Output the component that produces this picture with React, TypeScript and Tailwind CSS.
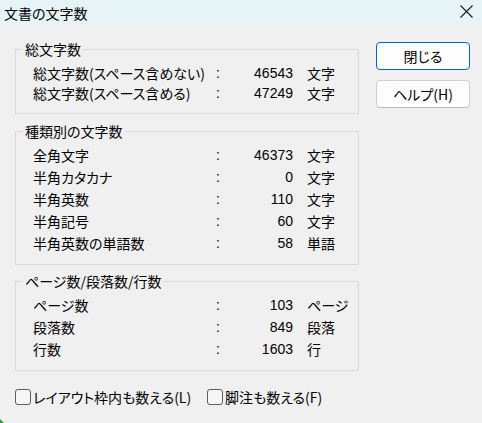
import React from "react";

const jp = "font-['Noto_Sans_CJK_JP','Noto_Sans',sans-serif] [font-feature-settings:'palt']";
const num = "font-['Liberation_Sans','Noto_Sans_CJK_JP',sans-serif]";

type Row = { label: string; value: string; unit: string };

function Group({
  title,
  rows,
  rowH,
  pt,
  className,
}: {
  title: string;
  rows: Row[];
  rowH: string;
  pt: string;
  className?: string;
}) {
  return (
    <div className={`relative border border-[#dadada] pb-[10px] ${pt} ${className ?? ""}`}>
      <span className={`absolute left-[7px] top-[-10px] bg-[#f0f0f0] px-[2px] text-[14px] leading-[18px] text-black ${jp}`}>
        {title}
      </span>
      {rows.map((r) => (
        <div key={r.label} className={`flex items-center ${rowH} text-[14px] text-black`}>
          <span className={`ml-[17px] w-[180px] whitespace-nowrap ${jp}`}>{r.label}</span>
          <span className={`w-[10px] text-center ${num}`}>:</span>
          <span className={`w-[70px] text-right ${num}`}>{r.value}</span>
          <span className={`ml-[14px] whitespace-nowrap ${jp}`}>{r.unit}</span>
        </div>
      ))}
    </div>
  );
}

function Checkbox({ label, className }: { label: string; className?: string }) {
  return (
    <div className={`flex items-center ${className ?? ""}`}>
      <span className="h-[16px] w-[16px] rounded-[3px] border border-[#5c5c5c] bg-[#f6f6f6]" />
      <span className={`ml-[2px] text-[14px] leading-[18px] text-black whitespace-nowrap ${jp}`}>{label}</span>
    </div>
  );
}

export default function App() {
  return (
    <div className="relative h-[423px] w-[482px] overflow-hidden bg-[#f0f0f0]">
      <div className="flex h-[25px] items-center justify-between bg-[#e7f4f7] pl-[4px] pr-[9px]">
        <span className={`text-[14px] leading-[18px] text-black ${jp}`}>文書の文字数</span>
        <svg width="13" height="13" viewBox="0 0 13 13" className="mb-[3px]">
          <path d="M0.5 0.5 L12.5 12.5 M12.5 0.5 L0.5 12.5" stroke="#1a1a1a" strokeWidth="1.1" fill="none" />
        </svg>
      </div>

      <div className="flex">
        <div className="ml-[15px] mt-[24px] w-[344px]">
          <Group
            title="総文字数"
            rowH="h-[20px]"
            pt="pt-[13px]"
            rows={[
              { label: "総文字数(スペース含めない)", value: "46543", unit: "文字" },
              { label: "総文字数(スペース含める)", value: "47249", unit: "文字" },
            ]}
          />
          <Group
            title="種類別の文字数"
            rowH="h-[22px]"
            pt="pt-[12px]"
            className="mt-[17px]"
            rows={[
              { label: "全角文字", value: "46373", unit: "文字" },
              { label: "半角カタカナ", value: "0", unit: "文字" },
              { label: "半角英数", value: "110", unit: "文字" },
              { label: "半角記号", value: "60", unit: "文字" },
              { label: "半角英数の単語数", value: "58", unit: "単語" },
            ]}
          />
          <Group
            title="ページ数/段落数/行数"
            rowH="h-[22px]"
            pt="pt-[12px]"
            className="mt-[16px]"
            rows={[
              { label: "ページ数", value: "103", unit: "ページ" },
              { label: "段落数", value: "849", unit: "段落" },
              { label: "行数", value: "1603", unit: "行" },
            ]}
          />
          <div className="mt-[17px] flex items-center">
            <Checkbox label="レイアウト枠内も数える(L)" className="w-[192px]" />
            <Checkbox label="脚注も数える(F)" />
          </div>
        </div>

        <div className="ml-[17px] mt-[17px] flex flex-col gap-[10px]">
          <button
            className={`h-[28px] w-[94px] rounded-[4px] border border-[#0067c0] bg-[#fdfdfd] text-[14px] text-black ${jp}`}
          >
            閉じる
          </button>
          <button
            className={`h-[28px] w-[94px] rounded-[4px] border border-[#d0d0d0] border-b-[#bcbcbc] bg-[#fdfdfd] text-[14px] text-black ${jp}`}
          >
            ヘルプ(H)
          </button>
        </div>
      </div>

      <svg className="absolute bottom-0 left-0" width="5" height="5" viewBox="0 0 5 5">
        <path d="M0 1 L4 5 L0 5 Z" fill="#3f9a3a" />
      </svg>
    </div>
  );
}
